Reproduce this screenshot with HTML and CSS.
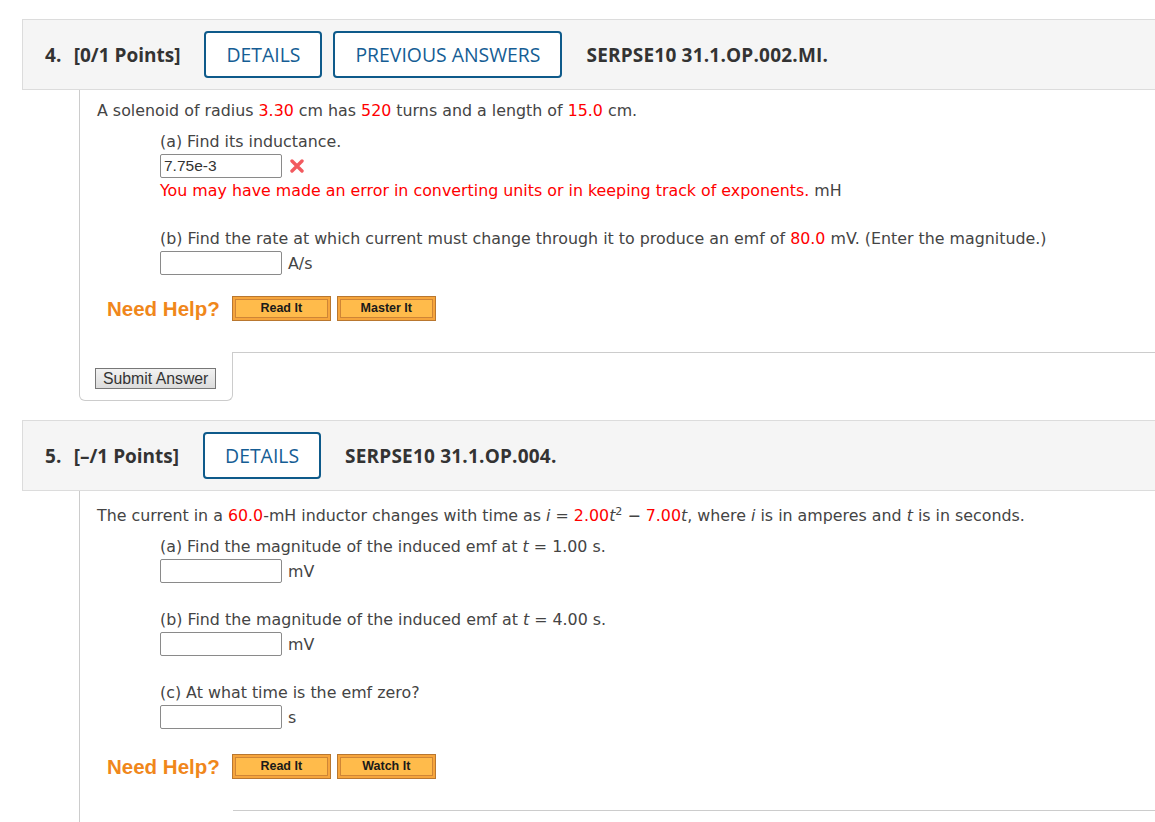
FILE: index.html
```html
<!DOCTYPE html>
<html lang="en">
<head>
    <meta charset="UTF-8">
    <title>Assignment</title>
    <link rel="stylesheet" href="styles.css">
</head>
<body>

<!-- question 4 -->
<div class="question">
    <div class="q-head">
        <span class="q-num">4.</span>
        <span class="q-points">[0/1 Points]</span>
        <button class="q-btn">DETAILS</button>
        <button class="q-btn q-btn-prev">PREVIOUS ANSWERS</button>
        <span class="q-code">SERPSE10 31.1.OP.002.MI.</span>
    </div>
    <div class="q-body">
        <p class="stem">A solenoid of radius <span class="red">3.30</span> cm has <span class="red">520</span> turns and a length of <span class="red">15.0</span> cm.</p>
        <div class="part">
            <p class="label">(a) Find its inductance.</p>
            <div class="answer">
                <input class="ans-input" type="text" value="7.75e-3">
                <svg class="wrong" width="14" height="14" viewBox="0 0 14 14">
                    <path d="M2 2 L12 12 M12 2 L2 12" stroke="#f25a5f" stroke-width="3.4" stroke-linecap="round"/>
                </svg>
            </div>
            <p class="feedback"><span class="red">You may have made an error in converting units or in keeping track of exponents.</span> mH</p>
        </div>
        <div class="part part-b">
            <p class="label">(b) Find the rate at which current must change through it to produce an emf of <span class="red">80.0</span> mV. (Enter the magnitude.)</p>
            <div class="answer">
                <input class="ans-input" type="text">
                <span class="unit">A/s</span>
            </div>
        </div>
        <div class="help">
            <span class="help-title">Need Help?</span>
            <span class="help-btn"><span>Read It</span></span>
            <span class="help-btn"><span>Master It</span></span>
        </div>
    </div>
    <div class="q-foot">
        <div class="submit-cell">
            <button class="submit">Submit Answer</button>
        </div>
        <div class="foot-rest"></div>
    </div>
</div>

<!-- question 5 -->
<div class="question q5">
    <div class="q-head">
        <span class="q-num">5.</span>
        <span class="q-points">[&ndash;/1 Points]</span>
        <button class="q-btn">DETAILS</button>
        <span class="q-code">SERPSE10 31.1.OP.004.</span>
    </div>
    <div class="q-body">
        <p class="stem">The current in a <span class="red">60.0</span>-mH inductor changes with time as <i>i</i> = <span class="red">2.00</span><i>t</i><sup>2</sup> &minus; <span class="red">7.00</span><i>t</i>, where <i>i</i> is in amperes and <i>t</i> is in seconds.</p>
        <div class="part">
            <p class="label">(a) Find the magnitude of the induced emf at <i>t</i> = 1.00 s.</p>
            <div class="answer">
                <input class="ans-input" type="text">
                <span class="unit">mV</span>
            </div>
        </div>
        <div class="part part-next">
            <p class="label">(b) Find the magnitude of the induced emf at <i>t</i> = 4.00 s.</p>
            <div class="answer">
                <input class="ans-input" type="text">
                <span class="unit">mV</span>
            </div>
        </div>
        <div class="part part-next">
            <p class="label">(c) At what time is the emf zero?</p>
            <div class="answer">
                <input class="ans-input" type="text">
                <span class="unit">s</span>
            </div>
        </div>
        <div class="help">
            <span class="help-title">Need Help?</span>
            <span class="help-btn"><span>Read It</span></span>
            <span class="help-btn"><span>Watch It</span></span>
        </div>
    </div>
    <div class="q-foot">
        <div class="submit-cell empty"></div>
        <div class="foot-rest"></div>
    </div>
</div>

</body>
</html>
```

FILE: styles.css
```css
body {
    margin: 0;
    overflow: hidden;
    background: #fff;
    color: #444;
    font-family: 'DejaVu Sans', Verdana, sans-serif;
    font-size: 15.85px;
}

p {
    margin: 0;
}

.red {
    color: #ff0000;
}

/* question block */
.question {
    margin: 19px 0 0 22px;
    width: 1180px;
}

.q5 {
    margin-top: 19px;
}

.q-head {
    display: flex;
    align-items: center;
    height: 47px;
    padding: 11px 0 11px 22px;
    background: #f5f5f5;
    border: 1px solid #dcdcdc;
    font-family: 'Open Sans', sans-serif;
    font-weight: 700;
    font-size: 19px;
    letter-spacing: 0.2px;
    color: #333;
}

.q-num {
    margin-right: 12px;
}

.q-points {
    margin-right: 24px;
    letter-spacing: 0;
}

.q-btn {
    height: 47px;
    padding: 0 20px;
    margin-right: 11px;
    border: 2px solid #0e5a8a;
    border-radius: 4px;
    background: #fff;
    color: #155d94;
    font-family: 'Open Sans', sans-serif;
    font-size: 19.4px;
    font-weight: 400;
}

.q-btn-prev {
    margin-right: 24px;
}

.q5 .q-btn {
    margin-right: 24px;
}

/* body with left rule */
.q-body {
    margin-left: 57px;
    border-left: 1px solid #cccccc;
    padding: 11px 0 31px 17px;
}

.q5 .q-body {
    padding-top: 15px;
}

.stem,
.label,
.feedback {
    line-height: 20px;
}

.part {
    margin: 11px 0 0 63px;
}

.part-b {
    margin-top: 28px;
}

.part-next {
    margin-top: 27px;
}

.answer {
    display: flex;
    align-items: center;
    margin-top: 2px;
    height: 24px;
}

.ans-input {
    box-sizing: border-box;
    width: 122px;
    height: 24px;
    margin: 0;
    padding: 1px 3px;
    border: 1px solid #8a8a8a;
    border-radius: 2px;
    font-family: 'Liberation Sans', Arial, sans-serif;
    font-size: 15.5px;
    color: #333;
}

.wrong {
    margin-left: 8px;
}

.unit {
    margin-left: 6px;
}

.feedback {
    margin-top: 3px;
}

sup {
    font-size: 11px;
    line-height: 0;
}

/* need help row */
.help {
    display: flex;
    align-items: center;
    margin: 21px 0 0 10px;
}

.q5 .help {
    margin-top: 25px;
}

.help-title {
    margin-right: 12px;
    font-family: 'Liberation Sans', Arial, sans-serif;
    font-weight: 700;
    font-size: 20.5px;
    color: #f0871b;
}

.help-btn {
    box-sizing: border-box;
    width: 99px;
    height: 25px;
    margin-right: 6px;
    padding: 2px;
    border: 1px solid #b9772f;
    background: #f6a53c;
}

.help-btn span {
    display: block;
    height: 17px;
    border: 1px solid #cf8536;
    background: #ffbb4b;
    text-align: center;
    line-height: 17px;
    font-family: 'Liberation Sans', Arial, sans-serif;
    font-weight: 700;
    font-size: 12.5px;
    color: #1a1a1a;
}

/* footer tab with submit */
.q-foot {
    display: flex;
    margin-left: 57px;
}

.submit-cell {
    box-sizing: border-box;
    width: 154px;
    height: 49px;
    padding: 16px 0 0 15px;
    border: 1px solid #cccccc;
    border-top: none;
    border-radius: 0 0 6px 6px;
}

.submit-cell.empty {
    border-bottom: none;
    border-right: none;
    border-radius: 0;
}

.foot-rest {
    flex: 1;
    border-top: 1px solid #cccccc;
}

.submit {
    height: 21px;
    padding: 0 7px;
    border: 1px solid #777;
    border-radius: 0;
    background: linear-gradient(#f2f2f2, #dcdcdc);
    font-family: 'Liberation Sans', Arial, sans-serif;
    font-size: 15.8px;
    color: #333;
    line-height: 18px;
}
```
